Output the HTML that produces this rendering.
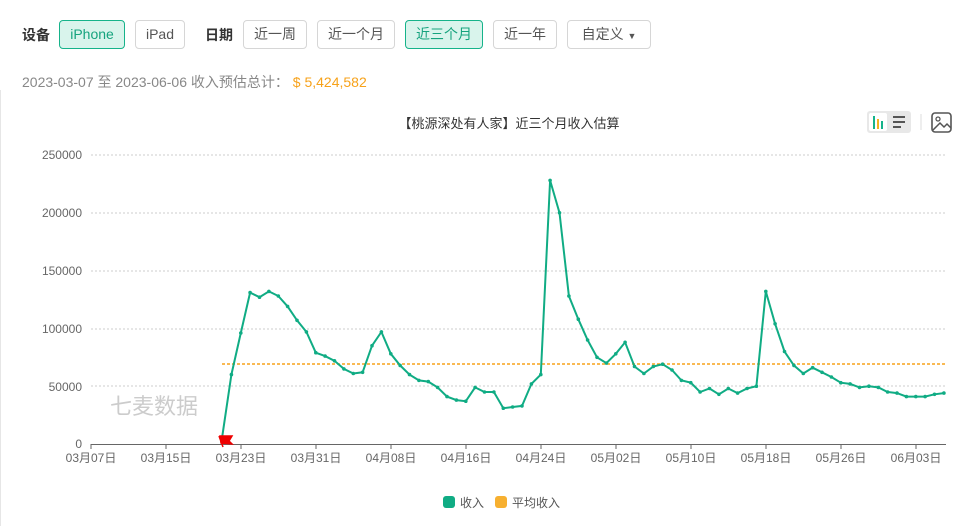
<!DOCTYPE html>
<html><head><meta charset="utf-8"><style>
body{margin:0;width:956px;height:526px;background:#fff;font-family:"Liberation Sans","Noto Sans CJK SC",sans-serif;overflow:hidden;position:relative}
.lbl{position:absolute;top:25px;font-size:14px;font-weight:bold;color:#333}
.btn{position:absolute;top:20px;height:29px;box-sizing:border-box;border:1px solid #d6d6d6;border-radius:4px;font-size:14px;color:#555;line-height:27px;text-align:center}
.on{background:#d9f4ec;border-color:#16b38a;color:#16a37e}
.sum{position:absolute;left:22px;top:72px;font-size:14px;color:#888}
.sum span{color:#f7a21a}
.lborder{position:absolute;left:0;top:90px;width:1px;height:436px;background:#e6e6e6}
</style></head><body>
<div class="lbl" style="left:22px">设备</div>
<div class="btn on" style="left:59px;width:66px">iPhone</div>
<div class="btn" style="left:135px;width:50px">iPad</div>
<div class="lbl" style="left:205px">日期</div>
<div class="btn" style="left:243px;width:64px">近一周</div>
<div class="btn" style="left:317px;width:78px">近一个月</div>
<div class="btn on" style="left:405px;width:78px">近三个月</div>
<div class="btn" style="left:493px;width:64px">近一年</div>
<div class="btn" style="left:567px;width:84px">自定义 <span style="font-size:9px">▼</span></div>
<div class="sum">2023-03-07 至 2023-06-06 收入预估总计：&nbsp;<span>$ 5,424,582</span></div>
<div class="lborder"></div>
<svg id="c" width="956" height="526" style="position:absolute;left:0;top:0" font-family="Liberation Sans,Noto Sans CJK SC,sans-serif">
<text x="509" y="128" font-size="13" fill="#333" text-anchor="middle">【桃源深处有人家】近三个月收入估算</text>
<rect x="867" y="111" width="44" height="22" rx="3" fill="#e8e8e8"/>
<rect x="869" y="113" width="18" height="18" rx="2" fill="#fff"/>
<rect x="873" y="116" width="2" height="13" fill="#16b38a"/><rect x="877" y="119" width="2" height="10" fill="#f2b320"/><rect x="881" y="121" width="2" height="8" fill="#16b38a"/>
<rect x="893" y="116" width="12" height="2" fill="#555"/><rect x="893" y="121" width="12" height="2" fill="#555"/><rect x="893" y="126" width="8" height="2" fill="#555"/>
<line x1="921" y1="114" x2="921" y2="130" stroke="#ddd"/>
<rect x="932" y="113" width="19" height="19" rx="3" fill="none" stroke="#555" stroke-width="1.6"/>
<circle cx="938" cy="119" r="2" fill="none" stroke="#555" stroke-width="1.3"/>
<path d="M933 130 L940 123 L944 127 L947 124 L951 128" fill="none" stroke="#555" stroke-width="1.5"/>
<g font-size="12" fill="#666" text-anchor="end">
<text x="82" y="159">250000</text><text x="82" y="217">200000</text><text x="82" y="275">150000</text><text x="82" y="333">100000</text><text x="82" y="391">50000</text><text x="82" y="448">0</text></g>
<g stroke="#ccc" stroke-dasharray="2,2"><line x1="91" y1="155" x2="946" y2="155"/><line x1="91" y1="213" x2="946" y2="213"/><line x1="91" y1="271" x2="946" y2="271"/><line x1="91" y1="329" x2="946" y2="329"/><line x1="91" y1="386" x2="946" y2="386"/></g>
<text x="110" y="414" font-size="22" fill="#ccc">七麦数据</text>
<line x1="91" y1="444.5" x2="946" y2="444.5" stroke="#666"/>
<g id="ticks" stroke="#666"></g>
<g id="xl" font-size="12" fill="#666" text-anchor="middle"></g>
<line x1="222" y1="364" x2="946" y2="364" stroke="#f7a21a" stroke-width="1.5" stroke-dasharray="3,2"/>
<polyline id="pl" fill="none" stroke="#10ac84" stroke-width="2"/>
<g id="dots" fill="#10ac84"></g>
<path d="M219 436 L223 447 M220 436 L232 436 L229 441 L232 444 L221 443Z" fill="#e00" stroke="#e00" stroke-width="1.5"/>
<rect x="443" y="496" width="12" height="12" rx="3" fill="#10ac84"/><text x="460" y="507" font-size="12" fill="#555">收入</text>
<rect x="495" y="496" width="12" height="12" rx="3" fill="#f7b030"/><text x="512" y="507" font-size="12" fill="#555">平均收入</text>
</svg>
<script>
var v=[5,60,96,131,127,132,128,119,107,97,79,76,72,65,61,62,85,97,78,68,60,55,54,49,41,38,37,49,45,45,31,32,33,52,60,228,200,128,108,90,75,70,78,88,67,61,67,69,64,55,53,45,48,43,48,44,48,50,132,104,80,68,61,66,62,58,53,52,49,50,49,45,44,41,41,41,43,44];
var p=[],d='';
v.forEach(function(a,i){var x=222+i*9.375,y=444-a*1.156;p.push(x.toFixed(1)+','+y.toFixed(1));d+='<circle cx="'+x.toFixed(1)+'" cy="'+y.toFixed(1)+'" r="1.8"/>';});
document.getElementById('pl').setAttribute('points',p.join(' '));
document.getElementById('dots').innerHTML=d;
var L=['03月07日','03月15日','03月23日','03月31日','04月08日','04月16日','04月24日','05月02日','05月10日','05月18日','05月26日','06月03日'],t='',s='';
L.forEach(function(a,i){var x=91+i*75;t+='<line x1="'+x+'" y1="444" x2="'+x+'" y2="449"/>';s+='<text x="'+x+'" y="462">'+a+'</text>';});
document.getElementById('ticks').innerHTML=t;document.getElementById('xl').innerHTML=s;
</script>
</body></html>
